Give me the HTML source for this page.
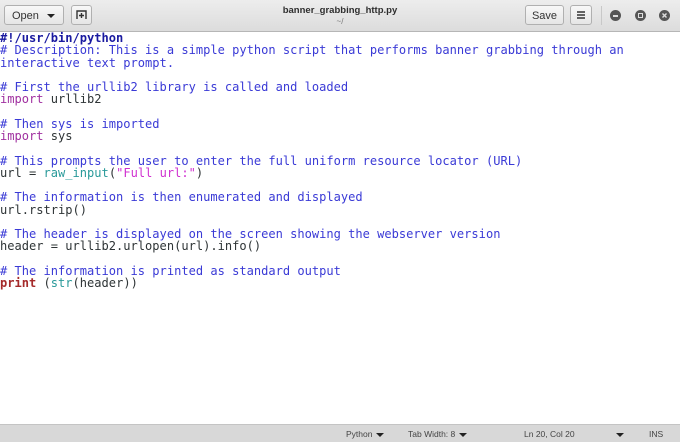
<!DOCTYPE html>
<html><head><style>
html,body{margin:0;padding:0;width:680px;height:441px;overflow:hidden;background:#fff;font-family:"Liberation Sans",sans-serif}
.hdr{position:absolute;left:0;top:0;width:680px;height:31px;background:linear-gradient(#ededed,#dcdcdc);border-bottom:1px solid #b6b6b6}
.btn{position:absolute;top:5px;height:20px;border:1px solid #b0b0b0;border-radius:3px;background:linear-gradient(#f8f8f8,#e6e6e6);font-size:11px;color:#333;line-height:20px;box-sizing:border-box}
.title{position:absolute;left:0;width:680px;text-align:center;top:5px;font-size:9.5px;font-weight:bold;color:#2e2e2e}
.sub{position:absolute;left:0;width:680px;text-align:center;top:17px;font-size:8px;color:#777}
.circ{position:absolute;top:10px;width:11px;height:11px;border-radius:50%;background:#555}
pre{position:absolute;left:0;top:32px;margin:0;font-family:"DejaVu Sans Mono","Liberation Mono",monospace;font-size:12.05px;line-height:12.25px;color:#2e3436}
.c{color:#3a3ad6}.s{color:#1a1aa0;font-weight:bold}.k{color:#a030a0}.f{color:#2a9a9a}.q{color:#d030d0}.p{color:#a52a2a;font-weight:bold}
.sb{position:absolute;left:0;top:424px;width:680px;height:17px;background:#d8d8d8;border-top:1px solid #c4c4c4;font-size:8.5px;color:#444}
.sb span{position:absolute;top:4px}
.tri{display:inline-block;width:0;height:0;border-left:4px solid transparent;border-right:4px solid transparent;border-top:4px solid #222;vertical-align:middle;margin-left:4px}
</style></head><body>
<div class="hdr">
<div class="btn" style="left:4px;width:60px;padding-left:7px">Open<span class="tri" style="margin-left:8px"></span></div>
<div class="btn" style="left:71px;width:21px"><svg width="19" height="18" viewBox="0 0 19 18"><path d="M5 13V5h9v8M9.5 7v5M7 9.5h5" stroke="#333" stroke-width="1.4" fill="none"/></svg></div>
<div class="title">banner_grabbing_http.py</div>
<div class="sub">~/</div>
<div class="btn" style="left:525px;width:39px;text-align:center">Save</div>
<div class="btn" style="left:570px;width:22px"><svg width="20" height="18"><path d="M6 6h8M6 9h8M6 12h8" stroke="#333" stroke-width="1.4"/></svg></div>
<div style="position:absolute;left:601px;top:6px;width:1px;height:19px;background:#c8c8c8"></div>
<div class="circ" style="left:610px"><div style="position:absolute;left:3px;top:5px;width:5px;height:1.5px;background:#ddd"></div></div>
<div class="circ" style="left:635px"><div style="position:absolute;left:3px;top:3px;width:3px;height:3px;border:1px solid #ddd"></div></div>
<div class="circ" style="left:659px"><svg width="11" height="11" style="position:absolute"><path d="M3.5 3.5l4 4M7.5 3.5l-4 4" stroke="#ddd" stroke-width="1.4"/></svg></div>
</div>
<pre><span class="s">#!/usr/bin/python</span>
<span class="c"># Description: This is a simple python script that performs banner grabbing through an
interactive text prompt.</span>

<span class="c"># First the urllib2 library is called and loaded</span>
<span class="k">import</span> urllib2

<span class="c"># Then sys is imported</span>
<span class="k">import</span> sys

<span class="c"># This prompts the user to enter the full uniform resource locator (URL)</span>
url = <span class="f">raw_input</span>(<span class="q">"Full url:"</span>)

<span class="c"># The information is then enumerated and displayed</span>
url.rstrip()

<span class="c"># The header is displayed on the screen showing the webserver version</span>
header = urllib2.urlopen(url).info()

<span class="c"># The information is printed as standard output</span>
<span class="p">print</span> (<span class="f">str</span>(header))</pre>
<div class="sb">
<span style="left:346px">Python<span class="tri"></span></span>
<span style="left:408px">Tab Width: 8<span class="tri"></span></span>
<span style="left:524px">Ln 20, Col 20</span>
<span style="left:612px"><span class="tri"></span></span>
<span style="left:649px">INS</span>
</div>
</body></html>
